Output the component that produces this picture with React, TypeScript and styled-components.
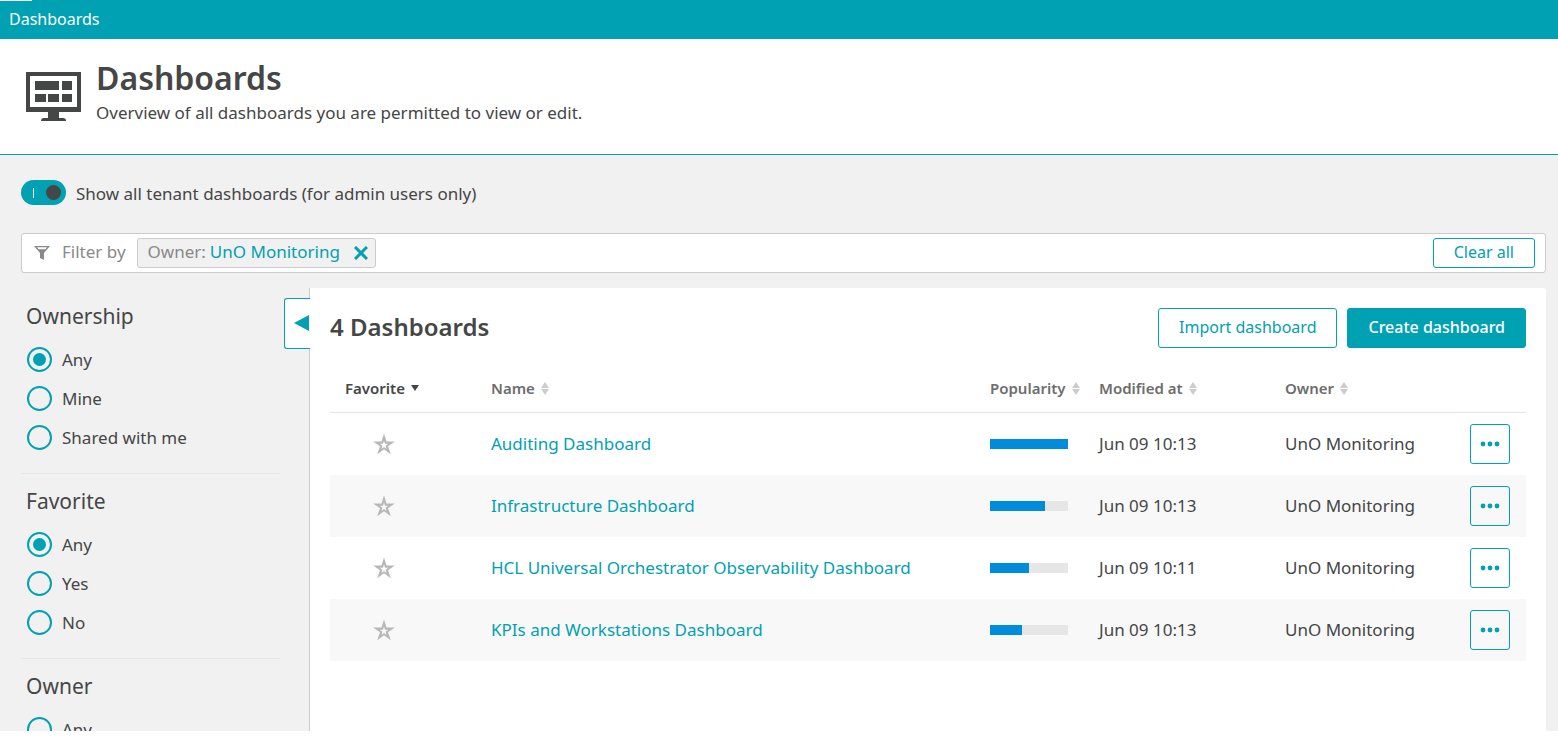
import React, { useState } from "react";
import styled, { createGlobalStyle } from "styled-components";

const teal = "#00a1b2";
const ink = "#454646";
const canvas = "#f1f1f1";

const GlobalStyle = createGlobalStyle`
  *, *::before, *::after { box-sizing: border-box; }
  body {
    margin: 0;
    background: #fff;
    color: ${ink};
    font: 400 17px/24px "Noto Sans", "Open Sans", sans-serif;
  }
  button, input { font: inherit; margin: 0; }
  h1, h2, h3, p, fieldset { margin: 0; padding: 0; border: 0; }
`;

const Page = styled.div`
  display: flex;
  flex-direction: column;
  height: calc(100vh - 10px);
  overflow: hidden;
  background: ${canvas};
`;

const TopBar = styled.nav`
  position: relative;
  flex: none;
  display: flex;
  align-items: center;
  height: 39px;
  padding: 0 9px 2px;
  background: ${teal};

  &::before {
    content: "";
    position: absolute;
    top: 0;
    left: 0;
    width: 32px;
    height: 1px;
    background: #fff;
  }
`;

const Crumb = styled.a`
  color: #fff;
  font-size: 16px;
  text-decoration: none;
`;

const PageHeader = styled.header`
  flex: none;
  display: flex;
  gap: 15px;
  height: 116px;
  padding: 19px 26px 0;
  background: #fff;
  border-bottom: 1px solid ${teal};
`;

const HeaderIcon = styled.svg`
  flex: none;
  width: 55px;
  height: 50px;
  margin-top: 14px;
  fill: ${ink};
`;

const PageTitle = styled.h1`
  margin-bottom: 3px;
  font-size: 32px;
  font-weight: 600;
  line-height: 40px;
`;

const Main = styled.main`
  flex: 1;
  min-height: 0;
  display: flex;
  flex-direction: column;
  padding: 25px 12px 0 21px;
`;

const ToggleLabel = styled.label`
  align-self: flex-start;
  display: flex;
  align-items: flex-start;
  gap: 10px;
  height: 28px;
  line-height: 28px;
  white-space: nowrap;
`;

const Toggle = styled.input`
  appearance: none;
  position: relative;
  width: 45px;
  height: 25px;
  border-radius: 13px;
  background: ${teal};
  cursor: pointer;

  &::before {
    content: "";
    position: absolute;
    top: 8px;
    left: 12px;
    width: 1px;
    height: 10px;
    background: #fff;
  }

  &::after {
    content: "";
    position: absolute;
    top: 5px;
    right: 5px;
    width: 15px;
    height: 15px;
    border-radius: 50%;
    background: ${ink};
  }

  &:not(:checked) { background: #b7b7b7; }
  &:not(:checked)::after { right: 25px; }
`;

const FilterBar = styled.div`
  flex: none;
  display: flex;
  align-items: center;
  height: 40px;
  margin-top: 25px;
  padding: 0 10px 0 12px;
  background: #fff;
  border: 1px solid #ccc;
  border-radius: 3px;
`;

const FunnelIcon = styled.svg`
  width: 16px;
  height: 14px;
  fill: #898989;
`;

const FilterHint = styled.span`
  margin: 0 11px 2px 12px;
  color: #898989;
`;

const Tag = styled.span`
  display: flex;
  align-items: center;
  height: 30px;
  padding: 0 7px 0 10px;
  background: ${canvas};
  border: 1px solid #ccc;
  border-radius: 3px;
  white-space: nowrap;
`;

const TagKey = styled.span`
  margin: 0 4px 2px 0;
  color: #898989;
`;

const TagValue = styled.span`
  margin: 0 14px 2px 0;
  color: ${teal};
`;

const TagRemove = styled.button`
  display: flex;
  padding: 0;
  background: none;
  border: 0;
  cursor: pointer;

  svg {
    width: 14px;
    height: 14px;
    stroke: ${teal};
    stroke-width: 3;
  }
`;

const Button = styled.button<{ $primary?: boolean; $small?: boolean }>`
  height: ${(p) => (p.$small ? 30 : 40)}px;
  padding: 0 20px 2px;
  background: ${(p) => (p.$primary ? teal : "#fff")};
  color: ${(p) => (p.$primary ? "#fff" : teal)};
  border: 1px solid ${teal};
  border-radius: 3px;
  font-size: 16px;
  font-weight: ${(p) => (p.$primary ? 500 : 400)};
  line-height: 24px;
  white-space: nowrap;
  cursor: pointer;
`;

const ClearButton = styled(Button)`
  margin-left: auto;
`;

const Columns = styled.div`
  flex: 1;
  min-height: 0;
  display: flex;
  margin-top: 15px;
`;

const Sidebar = styled.aside`
  flex: none;
  width: 288px;
  padding: 1px 29px 0 0;
`;

const FilterGroup = styled.fieldset`
  height: 185px;
  min-width: 0;
  padding: 13px 5px 0;
  border-bottom: 1px solid #e6e6e6;
`;

const GroupTitle = styled.h3`
  margin-bottom: 10px;
  font-size: 21px;
  font-weight: 400;
  line-height: 28px;
`;

const RadioLabel = styled.label`
  display: flex;
  align-items: center;
  gap: 10px;
  height: 39px;
  padding-left: 1px;
`;

const Radio = styled.input`
  appearance: none;
  display: grid;
  place-items: center;
  flex: none;
  width: 25px;
  height: 25px;
  border: 2px solid ${teal};
  border-radius: 50%;
  cursor: pointer;

  &:checked::before {
    content: "";
    width: 13px;
    height: 13px;
    border-radius: 50%;
    background: ${teal};
  }
`;

const Panel = styled.section`
  position: relative;
  flex: 1;
  min-width: 0;
  padding: 20px;
  background: #fff;
  border-left: 1px solid #ccc;
  border-top-right-radius: 3px;
`;

const CollapseButton = styled.button`
  position: absolute;
  top: 10px;
  left: -26px;
  display: flex;
  align-items: center;
  justify-content: flex-end;
  width: 26px;
  height: 51px;
  padding: 0 1px 2px 0;
  background: #fff;
  border: 1px solid ${teal};
  border-right: 0;
  border-radius: 3px 0 0 3px;
  cursor: pointer;

  svg {
    width: 15px;
    height: 16px;
    fill: ${teal};
  }
`;

const PanelHead = styled.div`
  display: flex;
  gap: 10px;
  height: 40px;
`;

const PanelTitle = styled.h2`
  margin-right: auto;
  font-size: 24px;
  font-weight: 600;
  line-height: 38px;
`;

const Table = styled.table`
  width: 100%;
  margin-top: 16px;
  table-layout: fixed;
  border-collapse: separate;
  border-spacing: 0;
`;

const Th = styled.th<{ $width?: number }>`
  width: ${(p) => (p.$width ? `${p.$width}px` : "auto")};
  height: 49px;
  padding: 0 0 0 15px;
  border-bottom: 1px solid #e6e6e6;
  text-align: left;
`;

const SortButton = styled.button<{ $active?: boolean }>`
  display: flex;
  align-items: center;
  gap: 6px;
  padding: 0;
  background: none;
  border: 0;
  color: ${(p) => (p.$active ? ink : "#6d6d6d")};
  font-size: 15px;
  font-weight: 600;
  line-height: 20px;
  white-space: nowrap;
  cursor: pointer;

  svg {
    width: 8px;
    height: 13px;
    fill: ${(p) => (p.$active ? ink : "#ccc")};
  }
`;

const Row = styled.tr`
  &:nth-child(even) { background: #f8f8f8; }
`;

const Td = styled.td`
  height: 62px;
  padding: 0 0 0 15px;
  white-space: nowrap;
`;

const NameLink = styled.a`
  color: ${teal};
  text-decoration: none;
`;

const StarButton = styled.button`
  display: flex;
  margin-left: 28px;
  padding: 0;
  background: none;
  border: 0;
  cursor: pointer;

  svg {
    width: 22px;
    height: 22px;
    fill: #b7b7b7;
  }
`;

const Meter = styled.div`
  width: 78px;
  height: 10px;
  background: #e6e6e6;
`;

const MeterFill = styled.div`
  height: 100%;
  background: #008cdb;
`;

const MoreButton = styled.button`
  display: grid;
  place-items: center;
  width: 40px;
  height: 40px;
  padding: 0;
  background: none;
  border: 1px solid ${teal};
  border-radius: 3px;
  cursor: pointer;

  svg {
    width: 20px;
    height: 6px;
    fill: ${teal};
  }
`;

const groups = [
  { title: "Ownership", options: ["Any", "Mine", "Shared with me"], selected: "Any" },
  { title: "Favorite", options: ["Any", "Yes", "No"], selected: "Any" },
  { title: "Owner", options: ["Any"], selected: "" },
];

const columns = [
  { label: "Favorite", width: 146, active: true },
  { label: "Name" },
  { label: "Popularity", width: 109 },
  { label: "Modified at", width: 186 },
  { label: "Owner", width: 185 },
];

const dashboards = [
  { name: "Auditing Dashboard", popularity: 100, modified: "Jun 09 10:13", owner: "UnO Monitoring" },
  { name: "Infrastructure Dashboard", popularity: 71, modified: "Jun 09 10:13", owner: "UnO Monitoring" },
  { name: "HCL Universal Orchestrator Observability Dashboard", popularity: 50, modified: "Jun 09 10:11", owner: "UnO Monitoring" },
  { name: "KPIs and Workstations Dashboard", popularity: 41, modified: "Jun 09 10:13", owner: "UnO Monitoring" },
];

function FilterSection({ title, options, selected }: (typeof groups)[number]) {
  const [value, setValue] = useState(selected);
  return (
    <FilterGroup aria-label={title}>
      <GroupTitle>{title}</GroupTitle>
      {options.map((option) => (
        <RadioLabel key={option}>
          <Radio type="radio" name={title} checked={value === option} onChange={() => setValue(option)} />
          {option}
        </RadioLabel>
      ))}
    </FilterGroup>
  );
}

export default function App() {
  const [showAll, setShowAll] = useState(true);
  return (
    <>
      <GlobalStyle />
      <Page>
        <TopBar>
          <Crumb href="#dashboards">Dashboards</Crumb>
        </TopBar>
        <PageHeader>
          <HeaderIcon viewBox="0 0 55 50" aria-hidden="true">
            <path fillRule="evenodd" d="M0 0h55v40H33v6h4q3 0 3 3H15q0-3 3-3h4v-6H0zM4 4v31h47V4z" />
            <path d="M9 9h24v9H9zM36 9h10v9H36zM9 22h11v8H9zM22 22h11v8H22zM36 22h10v8H36z" />
          </HeaderIcon>
          <div>
            <PageTitle>Dashboards</PageTitle>
            <p>Overview of all dashboards you are permitted to view or edit.</p>
          </div>
        </PageHeader>
        <Main>
          <ToggleLabel>
            <Toggle type="checkbox" role="switch" checked={showAll} onChange={() => setShowAll(!showAll)} />
            Show all tenant dashboards (for admin users only)
          </ToggleLabel>
          <FilterBar>
            <FunnelIcon viewBox="0 0 16 14" aria-hidden="true">
              <path fillRule="evenodd" d="M0 0h16l-6 7v7l-4-2V7zM3 1.200l1.500 2h7l1.500-2z" />
            </FunnelIcon>
            <FilterHint>Filter by</FilterHint>
            <Tag>
              <TagKey>Owner:</TagKey>
              <TagValue>UnO Monitoring</TagValue>
              <TagRemove aria-label="Remove filter">
                <svg viewBox="0 0 14 14"><path d="M1 1l12 12M13 1L1 13" /></svg>
              </TagRemove>
            </Tag>
            <ClearButton $small>Clear all</ClearButton>
          </FilterBar>
          <Columns>
            <Sidebar>
              {groups.map((group) => (
                <FilterSection key={group.title} {...group} />
              ))}
            </Sidebar>
            <Panel>
              <CollapseButton aria-label="Collapse filters">
                <svg viewBox="0 0 15 16"><path d="M15 0v16L0 8z" /></svg>
              </CollapseButton>
              <PanelHead>
                <PanelTitle>4 Dashboards</PanelTitle>
                <Button>Import dashboard</Button>
                <Button $primary>Create dashboard</Button>
              </PanelHead>
              <Table>
                <thead>
                  <tr>
                    {columns.map((column) => (
                      <Th key={column.label} $width={column.width}>
                        <SortButton $active={column.active}>
                          {column.label}
                          <svg viewBox="0 0 8 13" aria-hidden="true">
                            <path d={column.active ? "M0 3h8L4 9z" : "M0 6l4-6 4 6zM0 7h8l-4 6z"} />
                          </svg>
                        </SortButton>
                      </Th>
                    ))}
                    <Th $width={71} aria-label="Actions" />
                  </tr>
                </thead>
                <tbody>
                  {dashboards.map((item) => (
                    <Row key={item.name}>
                      <Td>
                        <StarButton aria-label={`Mark ${item.name} as favorite`}>
                          <svg viewBox="0 0 22 22">
                            <path
                              fillRule="evenodd"
                              d="M11 .5l2.500 8.100 8.400-.2-6.900 4.900 2.800 8-6.800-5.100-6.800 5.100 2.800-8L.1 8.400l8.400.2zM11 7.500l-1 3.200H6.700l2.700 2-1 3.200 2.600-2 2.600 2-1-3.200 2.700-2H12z"
                            />
                          </svg>
                        </StarButton>
                      </Td>
                      <Td><NameLink href="#dashboard">{item.name}</NameLink></Td>
                      <Td>
                        <Meter role="img" aria-label={`Popularity ${item.popularity}%`}>
                          <MeterFill style={{ width: `${item.popularity}%` }} />
                        </Meter>
                      </Td>
                      <Td>{item.modified}</Td>
                      <Td>{item.owner}</Td>
                      <Td>
                        <MoreButton aria-label={`Actions for ${item.name}`}>
                          <svg viewBox="0 0 20 6">
                            <circle cx="3" cy="3" r="2.400" />
                            <circle cx="10" cy="3" r="2.400" />
                            <circle cx="17" cy="3" r="2.400" />
                          </svg>
                        </MoreButton>
                      </Td>
                    </Row>
                  ))}
                </tbody>
              </Table>
            </Panel>
          </Columns>
        </Main>
      </Page>
    </>
  );
}
